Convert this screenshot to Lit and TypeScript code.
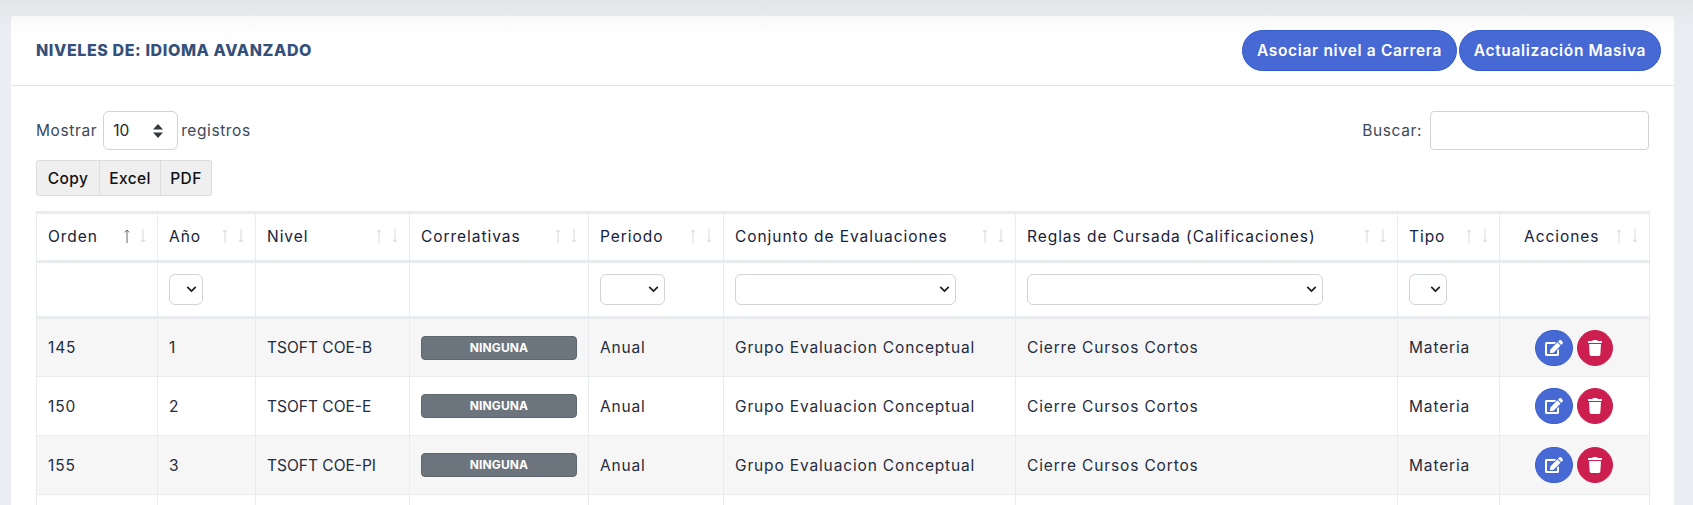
import { LitElement, html, css, svg } from "lit";
import { customElement } from "lit/decorators.js";

const arrows = (active = false) => html`<span class="arrows ${active ? "active" : ""}">
  <svg width="8" height="14" viewBox="0 0 8 14" class="up"><path d="M4 14V1M1.8 3.4L4 1l2.2 2.4" fill="none" stroke="currentColor" stroke-width="1"/></svg>
  <svg width="8" height="14" viewBox="0 0 8 14" class="down"><path d="M4 0v13M1.8 10.6L4 13l2.2-2.4" fill="none" stroke="currentColor" stroke-width="1"/></svg>
</span>`;

const editIcon = svg`<path d="M402.6 83.2l90.2 90.2c3.8 3.8 3.8 10 0 13.8L274.4 405.6l-92.8 10.3c-12.4 1.4-22.9-9.1-21.5-21.5l10.3-92.8L388.8 83.2c3.8-3.8 10-3.8 13.8 0zm162-22.9l-48.8-48.8c-15.2-15.2-39.9-15.2-55.2 0l-35.4 35.4c-3.8 3.8-3.8 10 0 13.8l90.2 90.2c3.8 3.8 10 3.8 13.8 0l35.4-35.4c15.2-15.3 15.2-40 0-55.2zM384 346.2V448H64V128h229.8c3.2 0 6.2-1.3 8.5-3.5l40-40c7.6-7.6 2.2-20.5-8.5-20.5H48C21.5 64 0 85.5 0 112v352c0 26.5 21.5 48 48 48h352c26.5 0 48-21.5 48-48V306.2c0-10.7-12.9-16-20.5-8.5l-40 40c-2.2 2.3-3.5 5.3-3.5 8.5z"/>`;
const trashIcon = svg`<path d="M432 32H312l-9.4-18.7A24 24 0 0 0 281.1 0H166.8a23.72 23.72 0 0 0-21.4 13.3L136 32H16A16 16 0 0 0 0 48v32a16 16 0 0 0 16 16h416a16 16 0 0 0 16-16V48a16 16 0 0 0-16-16zM53.2 467a48 48 0 0 0 47.9 45h245.8a48 48 0 0 0 47.9-45L416 128H32z"/>`;

const columns = [
  { label: "Orden", width: 121, active: true },
  { label: "Año", width: 98 },
  { label: "Nivel", width: 154 },
  { label: "Correlativas", width: 179 },
  { label: "Periodo", width: 135 },
  { label: "Conjunto de Evaluaciones", width: 292 },
  { label: "Reglas de Cursada (Calificaciones)", width: 382 },
  { label: "Tipo", width: 102 },
  { label: "Acciones", width: 150, center: true },
];

const rows = [
  { orden: "145", anio: "1", nivel: "TSOFT COE-B" },
  { orden: "150", anio: "2", nivel: "TSOFT COE-E" },
  { orden: "155", anio: "3", nivel: "TSOFT COE-PI" },
];

@customElement("app-root")
export class AppRoot extends LitElement {
  static styles = css`
    :host {
      display: block;
      height: 505px;
      overflow: hidden;
      box-sizing: border-box;
      padding: 16px 19px 0 11px;
      background: linear-gradient(#e3e6e9, #eaedf1 30px);
      font-family: Inter, "Liberation Sans", sans-serif;
      font-size: 15.5px;
      letter-spacing: 0.85px;
      color: #212529;
    }
    .card {
      background: #fff;
      border-radius: 4px 4px 0 0;
      height: 520px;
    }
    .card-header {
      height: 70px;
      box-sizing: border-box;
      padding: 14px 13px 0 25px;
      display: flex;
      justify-content: space-between;
      align-items: flex-start;
      border-bottom: 1px solid #e3e5ec;
      background: linear-gradient(#f9f9f9, #fff 22px);
      border-radius: 4px 4px 0 0;
    }
    h1 {
      margin: 0;
      line-height: 41px;
      font-size: 16px;
      font-weight: 800;
      color: #34507a;
      letter-spacing: 0.6px;
    }
    .head-actions { display: flex; gap: 2px; }
    .pill {
      height: 41px;
      box-sizing: border-box;
      padding: 0;
      border: 1px solid #2f5bcf;
      border-radius: 21px;
      background: #4669d4;
      color: #fff;
      font: 600 15.5px Inter, "Liberation Sans", sans-serif;
      letter-spacing: 0.65px;
      white-space: nowrap;
    }
    .pill.first { width: 215px; }
    .pill.second { width: 202px; }
    .card-body { padding: 25px 25px 0 25px; }
    .controls { display: flex; justify-content: space-between; align-items: flex-start; }
    .length, .search {
      display: flex;
      align-items: center;
      gap: 6px;
      color: #3c4858;
      height: 39px;
      font-size: 15.5px;
      letter-spacing: 0.6px;
    }
    .search { gap: 8px; }
    select {
      font: 15.5px Inter, "Liberation Sans", sans-serif;
      color: #212529;
      background-color: #fff;
      border: 1px solid #ced4da;
      border-radius: 6px;
      appearance: none;
      -webkit-appearance: none;
      box-sizing: border-box;
      margin: 0;
    }
    .len-select {
      width: 75px;
      height: 39px;
      margin-right: -3px;
      padding: 0 0 0 9px;
      background-image: url("data:image/svg+xml,%3Csvg xmlns='http://www.w3.org/2000/svg' viewBox='0 0 10 14'%3E%3Cpath fill='%23343a40' d='M5 0l5 5.5H0zM5 14l5-5.5H0z'/%3E%3C/svg%3E");
      background-repeat: no-repeat;
      background-position: right 14px center;
      background-size: 10px 14px;
    }
    .search input {
      width: 219px;
      height: 39px;
      box-sizing: border-box;
      border: 1px solid #ced4da;
      border-radius: 4px;
      background: #fff;
      margin: 0;
    }
    .buttons {
      display: inline-flex;
      margin-top: 10px;
      height: 36px;
      vertical-align: top;
    }
    .buttons button {
      height: 36px;
      box-sizing: border-box;
      border: 1px solid #dcdcdc;
      border-left: 0;
      background: #efefef;
      color: #111;
      font: 500 15.5px Inter, "Liberation Sans", sans-serif;
      letter-spacing: 0.4px;
      padding: 0;
    }
    .buttons button:first-child { border-left: 1px solid #dcdcdc; border-radius: 3px 0 0 3px; width: 64px; }
    .buttons button:nth-child(2) { width: 61px; }
    .buttons button:last-child { border-radius: 0 3px 3px 0; width: 51px; }
    .table-wrap { margin-top: 15px; }
    table {
      border-collapse: collapse;
      table-layout: fixed;
      width: 1613px;
      color: #16213a;
    }
    th, td {
      border: 1px solid #e9ecef;
      box-sizing: border-box;
      padding: 0 11px;
      text-align: left;
      font-weight: 400;
      white-space: nowrap;
    }
    thead tr.labels th {
      height: 49px;
      padding-bottom: 2px;
      border-top: 3px solid #e9ecef;
      border-bottom: 3px solid #e9ecef;
      font-weight: 400;
      font-size: 15.5px;
      letter-spacing: 0.95px;
    }
    .th-inner { display: flex; align-items: center; justify-content: space-between; margin-right: -1px; }
    .th-inner.center .lbl { margin-left: 13px; }
    .arrows { display: inline-flex; gap: 8px; color: #d8d8d8; flex: none; }
    .arrows.active .up { color: #6a6a6a; }
    thead tr.filters td { height: 56px; border-bottom: 3px solid #e9ecef; padding: 0 10px 0 11px; vertical-align: middle; }
    .f {
      display: block;
      height: 31px;
      padding: 0;
      background-image: url("data:image/svg+xml,%3Csvg xmlns='http://www.w3.org/2000/svg' viewBox='0 0 16 16'%3E%3Cpath fill='none' stroke='%23222' stroke-width='2.6' stroke-linecap='round' stroke-linejoin='round' d='M2.5 5l5.5 5.5L13.5 5'/%3E%3C/svg%3E");
      background-repeat: no-repeat;
      background-position: right 5px center;
      background-size: 11px 11px;
    }
    tbody td { height: 59px; color: #252c3d; }
    tbody td.nivel { letter-spacing: 0; }
    tbody tr.odd td { background: #f6f6f6; }
    .badge {
      display: block;
      height: 24px;
      line-height: 22px;
      box-sizing: border-box;
      background: #6c757d;
      border: 1px solid #5f676e;
      border-radius: 4px;
      color: #fff;
      font-size: 12px;
      font-weight: 700;
      letter-spacing: 0.1px;
      text-align: center;
    }
    .acts { display: flex; justify-content: center; gap: 4px; margin-left: -2px; }
    .act {
      height: 36px;
      padding: 0;
      border-radius: 18px;
      border: 1px solid transparent;
      display: flex;
      align-items: center;
      justify-content: center;
      box-sizing: border-box;
    }
    .act svg { fill: #fff; height: 16px; display: block; }
    .act.edit { width: 38px; background: #4669d4; border-color: #3a60cc; }
    .act.del { width: 36px; background: #cd1f4f; border-color: #cd1f4f; }
  `;

  render() {
    return html`
      <div class="card">
        <div class="card-header">
          <h1>NIVELES DE: IDIOMA AVANZADO</h1>
          <div class="head-actions">
            <button class="pill first">Asociar nivel a Carrera</button>
            <button class="pill second">Actualización Masiva</button>
          </div>
        </div>
        <div class="card-body">
          <div class="controls">
            <div>
              <label class="length">
                Mostrar
                <select class="len-select"><option>10</option></select>
                registros
              </label>
              <div class="buttons">
                <button>Copy</button><button>Excel</button><button>PDF</button>
              </div>
            </div>
            <label class="search">Buscar: <input type="search" /></label>
          </div>
          <div class="table-wrap">
            <table>
              <colgroup>
                ${columns.map((c) => html`<col style="width:${c.width}px" />`)}
              </colgroup>
              <thead>
                <tr class="labels">
                  ${columns.map(
                    (c) => html`<th>
                      <div class="th-inner ${c.center ? "center" : ""}">
                        <span class="lbl">${c.label}</span>${arrows(!!c.active)}
                      </div>
                    </th>`
                  )}
                </tr>
                <tr class="filters">
                  <td></td>
                  <td><select class="f" style="width:34px"><option></option></select></td>
                  <td></td>
                  <td></td>
                  <td><select class="f" style="width:65px"><option></option></select></td>
                  <td><select class="f" style="width:221px"><option></option></select></td>
                  <td><select class="f" style="width:296px"><option></option></select></td>
                  <td><select class="f" style="width:38px"><option></option></select></td>
                  <td></td>
                </tr>
              </thead>
              <tbody>
                ${rows.map(
                  (r, i) => html`<tr class="${i % 2 === 0 ? "odd" : ""}">
                    <td>${r.orden}</td>
                    <td>${r.anio}</td>
                    <td class="nivel">${r.nivel}</td>
                    <td><span class="badge">NINGUNA</span></td>
                    <td>Anual</td>
                    <td>Grupo Evaluacion Conceptual</td>
                    <td>Cierre Cursos Cortos</td>
                    <td>Materia</td>
                    <td>
                      <div class="acts">
                        <button class="act edit" aria-label="Editar"><svg viewBox="0 0 576 512">${editIcon}</svg></button>
                        <button class="act del" aria-label="Eliminar"><svg viewBox="0 0 448 512">${trashIcon}</svg></button>
                      </div>
                    </td>
                  </tr>`
                )}
                <tr>${columns.map(() => html`<td></td>`)}</tr>
              </tbody>
            </table>
          </div>
        </div>
      </div>
    `;
  }
}
